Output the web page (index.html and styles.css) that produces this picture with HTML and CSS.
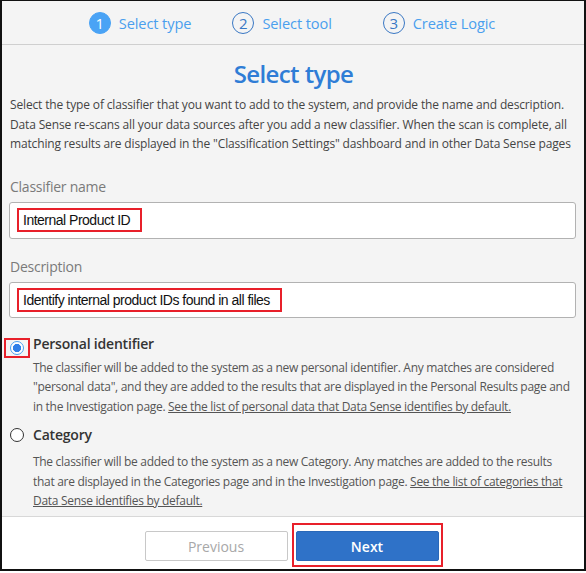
FILE: index.html
```html
<!DOCTYPE html>
<html>
<head>
<meta charset="utf-8">
<link rel="stylesheet" href="styles.css">
</head>
<body>
<div class="frame">
  <div class="steps">
    <div class="step s1"><span class="num active">1</span><span class="label">Select type</span></div>
    <div class="step s2"><span class="num">2</span><span class="label">Select tool</span></div>
    <div class="step s3"><span class="num">3</span><span class="label">Create Logic</span></div>
  </div>
  <div class="content">
    <h1 class="title">Select type</h1>
    <p class="intro">Select the type of classifier that you want to add to the system, and provide the name and description. Data Sense re-scans all your data sources after you add a new classifier. When the scan is complete, all matching results are displayed in the "Classification Settings" dashboard and in other Data Sense pages</p>
    <div class="field">
      <div class="field-label">Classifier name</div>
      <div class="input"><span class="hl">Internal Product ID</span></div>
    </div>
    <div class="field field2">
      <div class="field-label">Description</div>
      <div class="input input2"><span class="hl">Identify internal product IDs found in all files</span></div>
    </div>
    <div class="option opt1">
      <div class="opt-head">
        <span class="radio-wrap hl-radio"><span class="radio checked"></span></span>
        <span class="opt-title">Personal identifier</span>
      </div>
      <p class="opt-desc">The classifier will be added to the system as a new personal identifier. Any matches are considered "personal data", and they are added to the results that are displayed in the Personal Results page and in the Investigation page. <a class="link">See the list of personal data that Data Sense identifies by default.</a></p>
    </div>
    <div class="option opt2">
      <div class="opt-head">
        <span class="radio-wrap"><span class="radio"></span></span>
        <span class="opt-title">Category</span>
      </div>
      <p class="opt-desc">The classifier will be added to the system as a new Category. Any matches are added to the results that are displayed in the Categories page and in the Investigation page. <a class="link">See the list of categories that Data Sense identifies by default.</a></p>
    </div>
  </div>
  <div class="footer">
    <button class="btn prev">Previous</button>
    <span class="next-hl"><button class="btn next">Next</button></span>
  </div>
</div>
</body>
</html>
```
FILE: styles.css
```css
html, body {
  margin: 0;
  padding: 0;
  background: #ffffff;
}
.frame {
  width: 582px;
  height: 568px;
  border-style: solid;
  border-color: #111;
  border-width: 1px 2px 2px 2px;
  background: #f4f4f4;
  font-family: "Open Sans", sans-serif;
  display: flex;
  flex-direction: column;
  overflow: hidden;
}
.steps {
  height: 44px;
  box-sizing: border-box;
  border-bottom: 1px solid #cfcfcf;
  display: flex;
  align-items: center;
  justify-content: center;
  padding-right: 2px;
  padding-top: 1px;
  flex: none;
}
.step {
  display: flex;
  align-items: center;
  color: #4a9fee;
  font-size: 14.6px;
  letter-spacing: -0.1px;
}
.s1 { margin-right: 41px; }
.s2 { margin-right: 51px; }
.num {
  width: 20px;
  height: 20px;
  border-radius: 50%;
  border: 1px solid #3a78c4;
  color: #3a78c4;
  display: inline-flex;
  align-items: center;
  justify-content: center;
  font-size: 15px;
  margin-right: 8px;
  line-height: 1;
  letter-spacing: 0;
}
.num.active {
  background: #4aa3f5;
  border-color: #4aa3f5;
  color: #fff;
}
.content {
  flex: 1;
  padding: 0 8px 0 7px;
}
.title {
  margin: 14px 0 0 0;
  text-align: center;
  font-size: 24px;
  font-weight: 600;
  color: #2f7dd6;
  line-height: 30px;
  letter-spacing: -0.6px;
  padding-left: 2px;
}
.intro {
  margin: 6px 0 0 1px;
  font-size: 12px;
  letter-spacing: -0.15px;
  line-height: 19.5px;
  color: #444;
}
.field {
  margin-top: 23px;
}
.field2 { margin-top: 18px; }
.field-label {
  font-size: 14px;
  letter-spacing: -0.25px;
  color: #7a7a7a;
  line-height: 20px;
  margin-left: 1px;
}
.input {
  margin-top: 5px;
  height: 37px;
  border: 1px solid #b2b2b2;
  border-radius: 3px;
  background: #fff;
  display: flex;
  align-items: center;
  padding-left: 7px;
  width: 567px;
  box-sizing: border-box;
}
.input2 { height: 36px; }
.hl {
  border: 2px solid #e8202a;
  font-family: "Liberation Sans", Arial, sans-serif;
  font-size: 14px;
  letter-spacing: -0.5px;
  color: #111;
  padding: 1px 10px 1px 4px;
  line-height: 18px;
}
.opt1 { margin-top: 16px; }
.opt2 { margin-top: 9px; }
.opt-head {
  display: flex;
  align-items: flex-start;
  margin-left: -5px;
}
.radio-wrap {
  width: 22px;
  height: 16px;
  border: 2px solid transparent;
  display: inline-flex;
  align-items: center;
  justify-content: center;
}
.hl-radio {
  border-color: #e8202a;
  margin-top: 4px;
}
.radio {
  width: 14px;
  height: 14px;
  border-radius: 50%;
  border: 1px solid #333;
  box-sizing: border-box;
  background: #fff;
}
.radio.checked {
  border: 1px solid #4a9fee;
  background: radial-gradient(circle, #2f7fe8 0 3.8px, #fff 4.4px);
}
.opt-title {
  margin-left: 3px;
  font-size: 14px;
  letter-spacing: -0.2px;
  font-weight: 600;
  color: #333;
  line-height: 20px;
}
.opt-desc {
  margin: 0 5px 0 24px;
  font-size: 12px;
  letter-spacing: -0.3px;
  line-height: 19.5px;
  color: #555;
}
.opt2 .opt-desc { margin-top: 7px; }
.link {
  text-decoration: underline;
  color: #555;
}
.footer {
  flex: none;
  height: 53px;
  box-sizing: border-box;
  background: #fff;
  border-top: 1px solid #d8d8d8;
  display: flex;
  justify-content: center;
  align-items: flex-end;
  padding-left: 1px;
  padding-bottom: 2px;
}
.btn {
  width: 143px;
  height: 30px;
  font-family: "Open Sans", sans-serif;
  font-size: 14px;
  border-radius: 2px;
}
.prev {
  background: #fff;
  border: 1px solid #c8c8c8;
  color: #a8a8a8;
  margin-right: 4px;
  margin-bottom: 6px;
}
.next-hl {
  border: 2px solid #e8202a;
  padding: 6px 2px 4px 2px;
  display: inline-flex;
}
.next {
  background: #2f72c8;
  border: 1px solid #2a68b8;
  color: #fff;
  font-weight: 600;
}
```
